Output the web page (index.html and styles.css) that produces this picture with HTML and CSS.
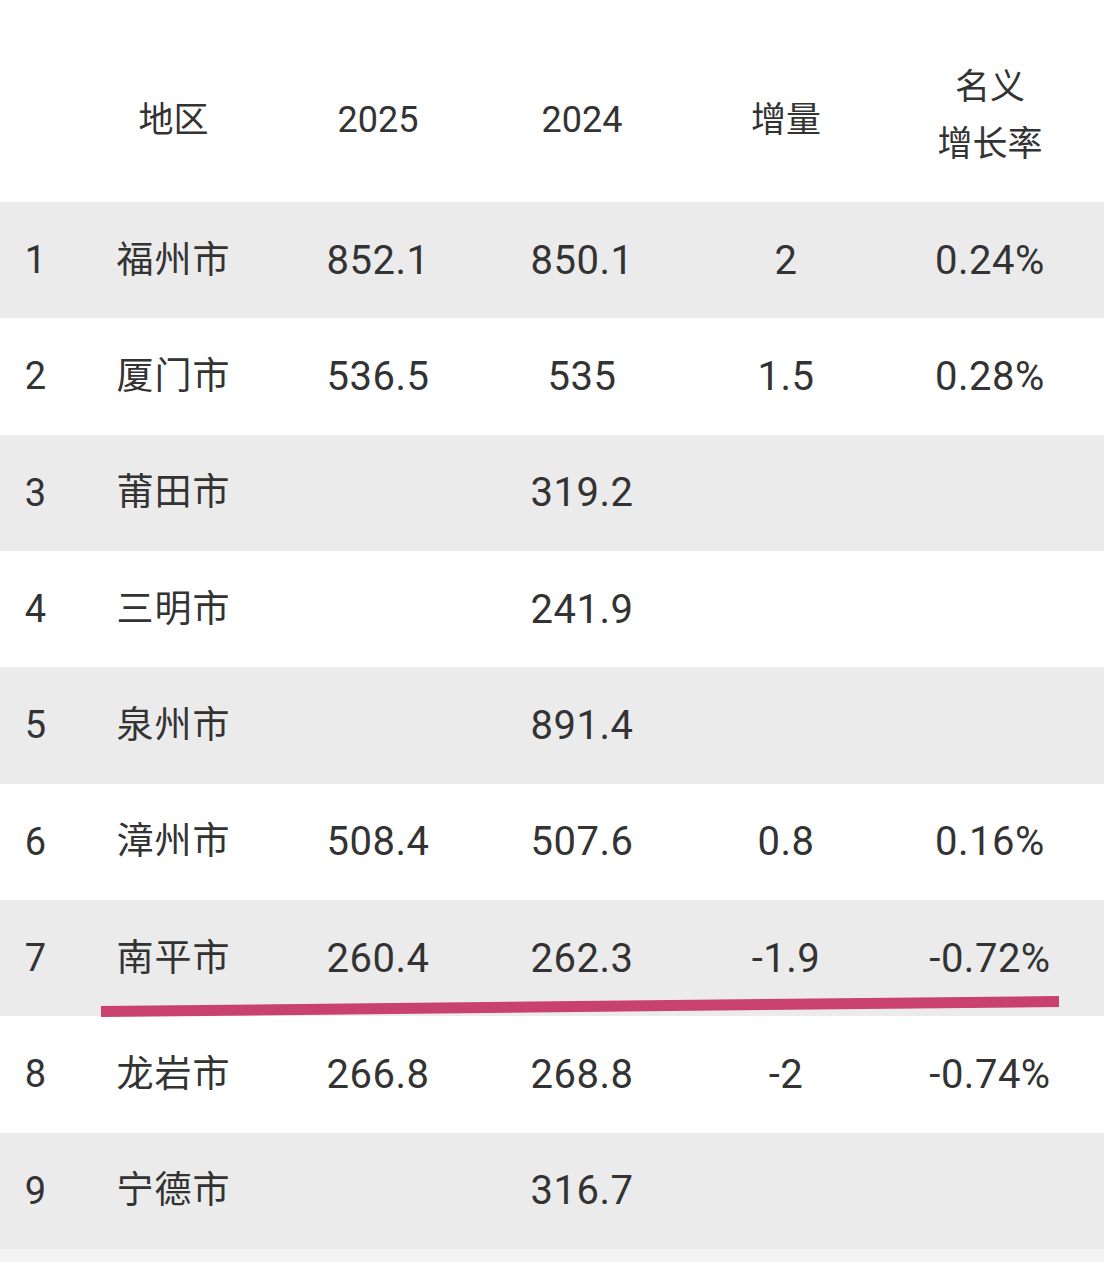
FILE: index.html
```html
<!DOCTYPE html>
<html lang="zh-CN">
<head>
<meta charset="utf-8">
<title>福建各市常住人口</title>
<link rel="stylesheet" href="styles.css">
</head>
<body>
<div class="sheet">
  <div class="row head">
    <div class="cell"></div>
    <div class="cell">地区</div>
    <div class="cell num">2025</div>
    <div class="cell num">2024</div>
    <div class="cell">增量</div>
    <div class="cell two">名义<br>增长率</div>
  </div>
  <div class="row grey">
    <div class="cell rank">1</div><div class="cell city">福州市</div><div class="cell">852.1</div><div class="cell">850.1</div><div class="cell">2</div><div class="cell">0.24%</div>
  </div>
  <div class="row">
    <div class="cell rank">2</div><div class="cell city">厦门市</div><div class="cell">536.5</div><div class="cell">535</div><div class="cell">1.5</div><div class="cell">0.28%</div>
  </div>
  <div class="row grey">
    <div class="cell rank">3</div><div class="cell city">莆田市</div><div class="cell"></div><div class="cell">319.2</div><div class="cell"></div><div class="cell"></div>
  </div>
  <div class="row">
    <div class="cell rank">4</div><div class="cell city">三明市</div><div class="cell"></div><div class="cell">241.9</div><div class="cell"></div><div class="cell"></div>
  </div>
  <div class="row grey">
    <div class="cell rank">5</div><div class="cell city">泉州市</div><div class="cell"></div><div class="cell">891.4</div><div class="cell"></div><div class="cell"></div>
  </div>
  <div class="row">
    <div class="cell rank">6</div><div class="cell city">漳州市</div><div class="cell">508.4</div><div class="cell">507.6</div><div class="cell">0.8</div><div class="cell">0.16%</div>
  </div>
  <div class="row grey">
    <div class="cell rank">7</div><div class="cell city">南平市</div><div class="cell">260.4</div><div class="cell">262.3</div><div class="cell">-1.9</div><div class="cell">-0.72%</div>
  </div>
  <div class="row">
    <div class="cell rank">8</div><div class="cell city">龙岩市</div><div class="cell">266.8</div><div class="cell">268.8</div><div class="cell">-2</div><div class="cell">-0.74%</div>
  </div>
  <div class="row grey">
    <div class="cell rank">9</div><div class="cell city">宁德市</div><div class="cell"></div><div class="cell">316.7</div><div class="cell"></div><div class="cell"></div>
  </div>
  <div class="row tail"></div>
  <svg class="mark" width="1104" height="1262" viewBox="0 0 1104 1262">
    <line x1="101" y1="1011.5" x2="1059" y2="1001.5" stroke="#c9416f" stroke-width="11"/>
  </svg>
</div>
</body>
</html>
```
FILE: styles.css
```css
html, body {
  margin: 0;
  padding: 0;
  background: #ffffff;
}
.sheet {
  position: relative;
  width: 1104px;
  height: 1262px;
  overflow: hidden;
  display: grid;
  grid-template-rows: 202px repeat(9, 116.33px) 1fr;
  font-family: Roboto, "Noto Sans CJK SC", sans-serif;
  color: #333333;
}
.row {
  display: grid;
  grid-template-columns: 71px 205px 204px 204px 204px 204px;
  align-items: center;
  font-size: 40px;
  letter-spacing: 0.5px;
}
.row.grey {
  background: #ebebeb;
}
.row.tail {
  background: #f3f3f3;
}
.row.head {
  box-sizing: border-box;
  padding-top: 30px;
  font-size: 35px;
  letter-spacing: 0;
}
.cell {
  text-align: center;
  white-space: nowrap;
}
.head .num {
  font-size: 36px;
  padding-top: 8px;
}
.head .two {
  line-height: 57px;
}
.rank {
  text-align: center;
  font-size: 38px;
  letter-spacing: 0;
}
.city {
  font-family: "Noto Sans CJK SC", sans-serif;
  font-size: 37px;
  letter-spacing: 1px;
  padding-bottom: 7px;
}
.mark {
  position: absolute;
  left: 0;
  top: 0;
  pointer-events: none;
}
```
